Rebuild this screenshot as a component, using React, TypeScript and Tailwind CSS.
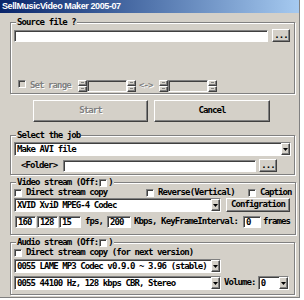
import type { ReactNode } from "react";

const sunken = "border border-[#808080] border-r-white border-b-white shadow-[inset_1px_1px_0_#404040]";
const raised = "border border-white border-r-[#404040] border-b-[#404040] shadow-[inset_-1px_-1px_0_#808080]";
const disabledText = "text-[#808080] [text-shadow:1px_1px_0_#fff]";

function Arrow() {
  return (
    <svg width="5" height="3" viewBox="0 0 5 3">
      <path d="M0 0h5L2.5 3z" fill="#000" />
    </svg>
  );
}

function Check({ disabled = false }: { disabled?: boolean }) {
  return <span className={`inline-block h-[8px] w-[8px] shrink-0 ${sunken} ${disabled ? "bg-[#d4d0c8]" : "bg-white"}`} />;
}

function Combo({ text, className }: { text: string; className: string }) {
  return (
    <div className={`flex h-[14px] shrink-0 items-stretch bg-white ${sunken} ${className}`}>
      <span className="flex-1 overflow-hidden whitespace-nowrap pl-[2px] leading-[12px]">{text}</span>
      <span className={`flex w-[9px] items-center justify-center bg-[#d4d0c8] ${raised}`}>
        <Arrow />
      </span>
    </div>
  );
}

function DotsButton({ className }: { className: string }) {
  return (
    <div className={`flex h-[13px] w-[18px] items-center justify-center bg-[#d4d0c8] leading-none ${raised} ${className}`}>...</div>
  );
}

function Spin() {
  const half = `flex h-[6px] w-[9px] items-center justify-center bg-[#d4d0c8] ${raised}`;
  return (
    <div className="flex h-[12px] items-stretch">
      <div className="flex flex-col">
        <span className={half}><span className="h-[1px] w-[3px] bg-[#808080]" /></span>
        <span className={half}><span className="h-[1px] w-[3px] bg-[#808080]" /></span>
      </div>
      <div className={`w-[40px] bg-[#d4d0c8] ${sunken}`} />
      <div className="flex flex-col">
        <span className={half}><span className="h-[1px] w-[3px] bg-[#808080]" /></span>
        <span className={half}><span className="h-[1px] w-[3px] bg-[#808080]" /></span>
      </div>
    </div>
  );
}

function Group({ label, className, children }: { label: ReactNode; className: string; children: ReactNode }) {
  return (
    <fieldset className={`mx-[10px] w-[285px] border border-[#808080] px-[3px] shadow-[inset_1px_1px_0_#fff,1px_1px_0_#fff] ${className}`}>
      <legend className="ml-[2px] flex items-center bg-[#d4d0c8] px-[1px] leading-[9px]">{label}</legend>
      {children}
    </fieldset>
  );
}

function Box({ text, className }: { text: string; className: string }) {
  return <div className={`h-[12px] shrink-0 bg-white pl-[2px] leading-[10px] ${sunken} ${className}`}>{text}</div>;
}

export default function App() {
  return (
    <div className="h-[298px] w-[300px] overflow-hidden border-r border-b border-[#808080] bg-[#d4d0c8] font-['DejaVu_Sans_Mono',monospace] text-[9px] font-bold tracking-[-0.9px] whitespace-nowrap text-black">
      <div className="flex h-[13px] items-center bg-linear-to-r from-[#0a246a] to-[#a6caf0] pl-[2px] font-['Liberation_Sans',Arial,sans-serif] text-[9px] font-bold tracking-[-0.4px] text-white">
        SellMusicVideo Maker 2005-07
      </div>

      <Group label="Source file ?" className="mt-[5px] h-[76px]">
        <div className="mt-[2px] flex items-center gap-[4px]">
          <div className={`h-[12px] w-[254px] bg-white ${sunken}`} />
          <DotsButton className="" />
        </div>
        <div className="mt-[37px] flex items-center">
          <span className="ml-[4px]"><Check disabled /></span>
          <span className={`ml-[4px] w-[48px] ${disabledText}`}>Set range</span>
          <Spin />
          <span className={`ml-[3px] w-[20px] ${disabledText}`}>&lt;-&gt;</span>
          <Spin />
        </div>
      </Group>

      <div className="mt-[6px] flex gap-[6px] pl-[33px]">
        <div className={`flex h-[22px] w-[115px] items-center justify-center bg-[#d4d0c8] ${raised} ${disabledText}`}>Start</div>
        <div className={`flex h-[22px] w-[116px] items-center justify-center bg-[#d4d0c8] ${raised}`}>Cancel</div>
      </div>

      <Group label="Select the job" className="mt-[9px] h-[44px]">
        <Combo text="Make AVI file" className="mt-[2px] w-[277px]" />
        <div className="mt-[3px] flex items-center">
          <span className="ml-[7px] w-[42px]">&lt;Folder&gt;</span>
          <div className={`h-[12px] w-[193px] bg-white ${sunken}`} />
          <DotsButton className="ml-[3px]" />
        </div>
      </Group>

      <Group
        label={
          <span className="flex items-center gap-[1px]">
            Video stream (Off:<Check />)
          </span>
        }
        className="mt-[3px] h-[57px]"
      >
        <div className="mt-[1px] flex h-[9px] items-center">
          <Check />
          <span className="ml-[4px] w-[120px]">Direct stream copy</span>
          <Check />
          <span className="ml-[4px] w-[90px]">Reverse(Vertical)</span>
          <Check />
          <span className="ml-[4px]">Caption</span>
        </div>
        <div className="mt-[1px] flex items-center gap-[5px]">
          <Combo text="XVID XviD MPEG-4 Codec" className="w-[207px]" />
          <div className={`flex h-[14px] w-[64px] items-center justify-center bg-[#d4d0c8] ${raised}`}>Configration</div>
        </div>
        <div className="mt-[3px] flex items-center">
          <Box text="160" className="ml-[1px] w-[21px]" />
          <Box text="128" className="ml-[1px] w-[21px]" />
          <Box text="15" className="ml-[1px] w-[22px]" />
          <span className="ml-[4px] w-[22px] shrink-0">fps,</span>
          <Box text="200" className="w-[24px]" />
          <span className="ml-[3px] w-[109px] shrink-0">Kbps, KeyFrameInterval:</span>
          <Box text="0" className="w-[18px]" />
          <span className="ml-[2px] shrink-0">frames</span>
        </div>
      </Group>

      <Group
        label={
          <span className="flex items-center gap-[1px]">
            Audio stream (Off:<Check />)
          </span>
        }
        className="mt-[3px] h-[57px]"
      >
        <div className="mt-[1px] flex h-[9px] items-center">
          <Check />
          <span className="ml-[4px]">Direct stream copy (for next version)</span>
        </div>
        <Combo text="0055 LAME MP3 Codec v0.9.0 ~ 3.96 (stable)" className="mt-[2px] w-[207px]" />
        <div className="mt-[3px] flex items-center">
          <Combo text="0055 44100 Hz, 128 kbps CBR, Stereo" className="w-[207px]" />
          <span className="ml-[3px]">Volume:</span>
          <Combo text="0" className="ml-[2px] w-[31px]" />
        </div>
      </Group>
    </div>
  );
}
